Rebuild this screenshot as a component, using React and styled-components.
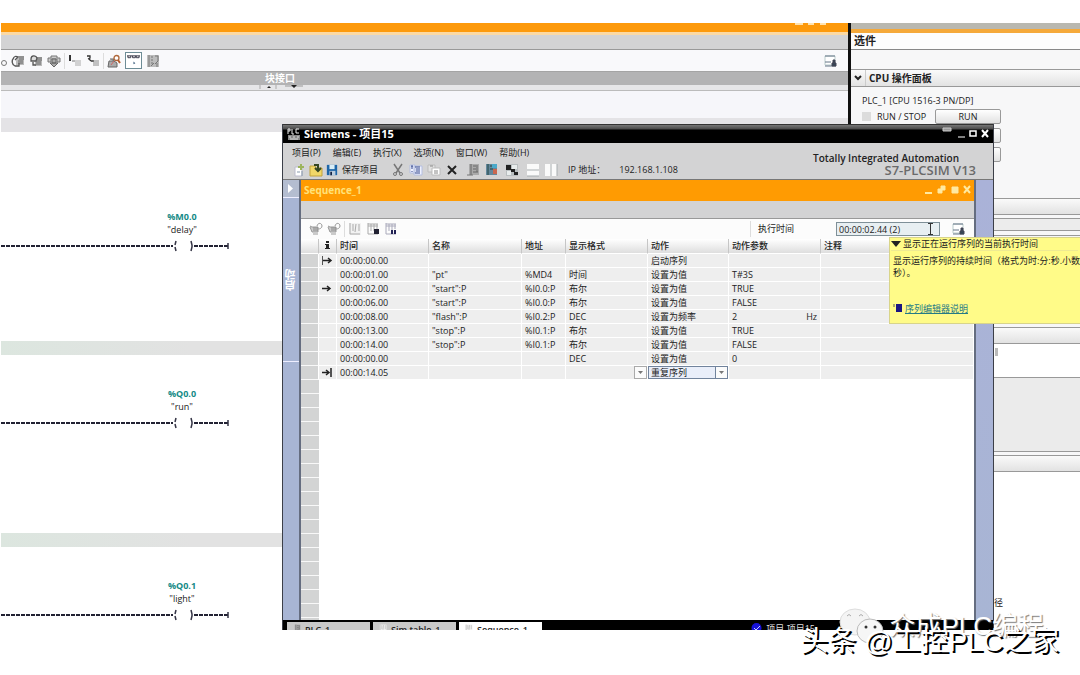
import styled, { createGlobalStyle, css } from "styled-components";

const GlobalStyle = createGlobalStyle`
  * {
    box-sizing: border-box;
  }

  body {
    margin: 0;
    background: #fff;
    color: #222;
    font-family: "Open Sans", "Noto Sans CJK SC", sans-serif;
    font-size: 9px;
    line-height: 12px;
    overflow: hidden;
  }

  button,
  input,
  select {
    margin: 0;
    padding: 0;
    border: 0;
    border-radius: 0;
    background: none;
    color: inherit;
    font: inherit;
  }
`;

const StyledPage = styled.div`
  position: relative;
  height: 100vh;
  padding: 23px 0 45px;
`;

const StyledScreen = styled.div`
  position: relative;
  display: flex;
  height: 100%;
  padding-left: 1px;
  overflow: hidden;
`;

const StyledEditor = styled.main`
  flex: 1;
  min-width: 0;
  background: #fff;
`;

const StyledOrangeBar = styled.div`
  display: flex;
  justify-content: flex-end;
  height: 12px;
  padding-right: 16px;
  background: linear-gradient(#fd9a0c 9px, #fbd9a4 9px);
`;

const StyledGreyBar = styled.div`
  height: 15px;
  background: #d3d3d4;
  border-bottom: 1px solid #999;
`;

const StyledToolbar = styled.div`
  display: flex;
  align-items: center;
  gap: 4px;
  height: 21px;
  background: #f9f9fb;

  button {
    display: flex;
  }
`;

const StyledEditorToolbar = styled(StyledToolbar)`
  padding: 0 11px 0 0;
`;

const StyledToggle = styled.button`
  padding: 1px;
  border: 1px solid #6d8c96;
  background: #fff;
`;

const StyledSeparator = styled.span`
  width: 1px;
  height: 16px;
  margin: 0 -1px;
  background: ${({ $hidden }) => ($hidden ? "transparent" : "#ddd")};
`;

const StyledSpacer = styled.span`
  flex: 1;
`;

const StyledInterfaceBar = styled.div`
  height: 14px;
  padding-left: 264px;
  background: #b3b3b4;
  border-top: 1px solid #a4a4a4;
  color: #fff;
  font-size: 10px;
  font-weight: 700;
`;

const StyledSplitter = styled.div`
  height: 6px;
  padding-left: 258px;
  background: #e6e6e8;
  border-bottom: 1px solid #bbb;

  svg {
    display: block;
  }
`;

const StyledPale = styled.div`
  height: 27px;
  background: #f6f6fa;
`;

const StyledNetwork = styled.section`
  height: ${({ $tall }) => ($tall ? 223 : 192)}px;
`;

const StyledNetworkBand = styled.div`
  height: 14px;
  margin-bottom: ${({ $tall }) => ($tall ? 78 : 32)}px;
  background: ${({ $tall }) => ($tall ? "#e4e3e6" : "linear-gradient(90deg, #dce6df, #e2e2e2 190px)")};
`;

const StyledOperand = styled.div`
  width: 60px;
  margin-left: 151px;
  text-align: center;
  line-height: 13px;

  strong {
    display: block;
    color: #148a86;
  }
`;

const StyledRung = styled.svg`
  display: block;
  margin-top: 4px;
`;

const StyledTasks = styled.aside`
  width: 232px;
  border-left: 3px solid #111;
  background: #f7f7f8;
`;

const StyledTasksTop = styled.div`
  height: 10px;
  background: linear-gradient(#b9b8b0 6px, #f5a93a 6px);
`;

const StyledTasksTitle = styled.h2`
  height: 17px;
  margin: 0;
  padding: 0 3px;
  border-bottom: 1px solid #888;
  background: #fdfdfd;
  font-size: 11px;
  line-height: 15px;
`;

const StyledTasksHeader = styled.div`
  display: flex;
  align-items: center;
  height: 18px;
  margin-top: 19px;
  border: solid #999;
  border-width: 1px 0;
  background: linear-gradient(#fafafa, #e2e2e2);

  h3 {
    margin: 0;
    padding-left: 3px;
    border-left: 1px solid #ccc;
    font-size: 10px;
    font-weight: 700;
    line-height: 16px;
  }

  svg {
    margin: 0 3px;
  }
`;

const StyledCpu = styled.div`
  height: 111px;
  padding: 8px 79px 0 11px;
`;

const StyledRunRow = styled.div`
  display: flex;
  align-items: center;
  height: 19px;

  i {
    width: 9px;
    height: 9px;
    margin-right: 6px;
    background: #dcdcdc;
  }
`;

const StyledPanelButton = styled.button`
  width: 66px;
  height: 15px;
  margin-left: auto;
  border: 1px solid #999;
  border-radius: 2px;
  background: linear-gradient(#fff, #e2e2e2);
  line-height: 13px;
`;

const StyledSection = styled.div`
  height: ${({ $height }) => $height}px;
  border-top: 1px solid #999;
  background: ${({ $fill }) => $fill || "#f7f7f8"};
`;

const StyledMark = styled.div`
  padding: 4px 0 0 144px;
`;

const StyledPathLabel = styled.div`
  padding: 125px 0 0 143px;
`;

const StyledWindow = styled.section`
  position: absolute;
  top: 101px;
  right: 86px;
  bottom: 0;
  left: 282px;
  display: flex;
  flex-direction: column;
  border: solid #3c3f48;
  border-width: 0 1px;
  background: #d3d3d4;
`;

const StyledTitleBar = styled.header`
  display: flex;
  align-items: center;
  gap: 4px;
  height: 19px;
  padding: 1px 3px 0 4px;
  background: linear-gradient(#333 1px, #777 1px, #4a4a4a 5px, #000 6px);
  color: #fff;

  h1 {
    flex: 1;
    margin: 0;
    font-size: 11px;
    font-weight: 700;
    line-height: 16px;
  }
`;

const StyledHead = styled.div`
  display: flex;
  height: 37px;
  border-bottom: 1px solid #777;
`;

const StyledHeadLeft = styled.div`
  flex: 1;
`;

const StyledMenu = styled.nav`
  display: flex;
  gap: 12px;
  padding: 4px 0 0 9px;
`;

const StyledAppToolbar = styled.div`
  display: flex;
  align-items: center;
  gap: 4px;
  height: 20px;
  padding: 1px 0 0 9px;

  button {
    display: flex;
    align-items: center;
    gap: 4px;
  }
`;

const StyledProjectTools = styled.div`
  display: flex;
  align-items: center;
  gap: 3px;
  margin-right: 6px;
`;

const StyledAddress = styled.span`
  padding-left: ${({ $gap }) => $gap}px;
  white-space: nowrap;
`;

const StyledBrand = styled.div`
  padding: 9px 17px 0 0;
  text-align: right;
  font-size: 10px;
  font-weight: 600;
  line-height: 12px;

  strong {
    display: block;
    color: #6a6a6a;
    font-size: 13px;
    font-weight: 600;
  }

  span {
    margin-right: 17px;
  }
`;

const StyledBody = styled.div`
  display: flex;
  flex: 1;
  min-height: 0;
`;

const StyledSide = styled.div`
  display: flex;
  flex-direction: column;
  align-items: center;
  width: 18px;
  border-right: 2px solid #656d80;
  background: #a8b5d4;
  color: #fff;
`;

const StyledSideToggle = styled.button`
  width: 100%;
  height: 18px;
  border-bottom: 1px solid #eef;
  background: #b4bdd0;

  svg {
    display: block;
    margin: auto;
  }
`;

const StyledSideTab = styled.button`
  width: 100%;
  height: 164px;
  border-bottom: 1px solid #eef;
  font-size: 11px;
  font-weight: 700;
  writing-mode: vertical-rl;

  span {
    display: inline-block;
    transform: rotate(180deg);
  }
`;

const StyledRightStrip = styled.div`
  width: 19px;
  border-left: 2px solid #656d80;
  background: linear-gradient(#aab2d8, #a8b5d4);
`;

const StyledSequence = styled.div`
  display: flex;
  flex: 1;
  flex-direction: column;
  min-width: 0;
  background: #fff;
`;

const StyledSequenceBar = styled.div`
  display: flex;
  align-items: center;
  height: 21px;
  padding: 0 2px 2px 3px;
  background: #ff9b02;
  color: #ffe27a;

  h2 {
    flex: 1;
    margin: 0;
    font-size: 10px;
    font-weight: 700;
  }
`;

const StyledSubBar = styled(StyledGreyBar)`
  height: 18px;
`;

const StyledSequenceToolbar = styled(StyledToolbar)`
  height: 20px;
  padding: 0 9px 0 8px;
  background: #fcfcfc;

  input {
    display: block;
    width: 104px;
    height: 14px;
    padding: 0 2px;
    border: 1px solid #7f9098;
    background: #e8eff2;
  }
`;

const StyledTimeLabel = styled.label`
  margin: 0 38px 0 4px;
`;

const StyledTimeBox = styled.div`
  position: relative;
  margin-right: 7px;

  svg {
    position: absolute;
    top: 1px;
    right: 6px;
  }
`;

const StyledGrid = styled.div`
  flex: 1;
  min-height: 0;
  overflow: hidden;
  background: repeating-linear-gradient(#f8f8f8 0 1px, #d3d4d4 1px 14px) 0 0 / 18px 100% no-repeat;
`;

const StyledTable = styled.table`
  width: 100%;
  border-collapse: separate;
  border-spacing: 0;
  table-layout: fixed;
  text-align: left;

  th {
    height: 15px;
    padding: 0 3px;
    border-right: 1px solid #c6c6c6;
    border-bottom: 1px solid #fff;
    background: linear-gradient(#fff, #dedede);
    color: #222;
    font-weight: 500;
    line-height: 12px;
  }

  td {
    height: 14px;
    padding: 0 3px;
    border-right: 1px solid #fff;
    border-bottom: 1px solid #fff;
    background: #eee;
    line-height: 13px;
    white-space: nowrap;
  }

  td:first-child {
    border-bottom-color: #f8f8f8;
    background: #d3d4d4;
  }

  td svg {
    display: block;
  }
`;

const StyledParam = styled.div`
  display: flex;
  justify-content: space-between;
`;

const StyledFlushCell = styled.td`
  && {
    padding: 0;
  }
`;

const arrowBox = css`
  display: flex;
  align-items: center;
  justify-content: center;
  width: 13px;
  height: 13px;
  border: 1px solid #aaa;
  background: #fbfbfb;
`;

const StyledArrowButton = styled.button`
  ${arrowBox}
  margin-left: auto;
`;

const StyledSelectBox = styled.div`
  position: relative;

  select {
    display: block;
    width: 100%;
    height: 13px;
    padding-left: 2px;
    border: 1px solid #71839c;
    background: #e9eef9;
    appearance: none;
    line-height: 11px;
  }

  span {
    ${arrowBox}
    position: absolute;
    top: 0;
    right: 0;
    border-color: #71839c;
    pointer-events: none;
  }
`;

const StyledFooter = styled.footer`
  display: flex;
  gap: 3px;
  height: 10px;
  padding: 2px 4px 0;
  background: #000;
  overflow: hidden;
`;

const StyledTab = styled.button`
  display: flex;
  gap: 4px;
  width: 83px;
  height: 18px;
  padding: 2px 6px;
  background: ${({ $active }) => ($active ? "#fff" : "#c9c9c9")};
  font-weight: 600;
`;

const StyledStatus = styled.div`
  display: flex;
  align-items: flex-start;
  gap: 4px;
  margin-right: 174px;
  margin-left: auto;
  color: #ddd;
  line-height: 14px;
`;

const StyledTooltip = styled.div`
  position: absolute;
  top: 214px;
  right: 0;
  width: 191px;
  height: 87px;
  padding: 0 4px 0 3px;
  border: 1px solid #d8d48a;
  border-right: 0;
  background: #fffb88;
  overflow: hidden;
  white-space: nowrap;

  p {
    margin: 4px 0 24px;
  }

  a {
    color: #247a86;
  }
`;

const StyledTooltipTitle = styled.div`
  display: flex;
  align-items: center;
  gap: 2px;
  margin: 0 -2px;
  border-bottom: 1px solid #eeea92;
`;

const StyledTooltipLink = styled.div`
  display: flex;
  gap: 2px;
`;

const StyledChannelMark = styled.div`
  position: absolute;
  right: 36px;
  bottom: 30px;
  display: flex;
  align-items: center;
  gap: 4px;
  color: #fff;
  font-family: "Liberation Sans", "Noto Sans CJK SC", sans-serif;
  font-size: 26px;
  line-height: 36px;
  text-shadow: 1px 1px 1px #777;
`;

const StyledAuthorMark = styled.div`
  position: absolute;
  right: 21px;
  bottom: 14px;
  color: #fff;
  font-family: "Liberation Sans", "Noto Sans CJK SC", sans-serif;
  font-size: 28px;
  line-height: 38px;
  text-shadow: 2px 2px 0 #000;
  white-space: nowrap;
`;

const icons = {
  dot: <circle cx="3" cy="9" r="2.5" fill="none" stroke="#777" />,
  goTo: (
    <>
      <path d="M6 2h7v9H5V7z" fill="#bbb" />
      <path d="M8 3h5M8 5h5M7 7h5M7 9h5" stroke="#666" />
      <path d="M3 4C0 6 1 11 4 12h4V9M2 5c1-3 3-3 5-2L4 6" fill="none" stroke="#555" strokeWidth="1.3" />
    </>
  ),
  goFrom: (
    <>
      <path d="M6 3h7v9H6z" fill="#bbb" />
      <path d="M8 4h5M8 6h5M7 8h5M7 10h5" stroke="#666" />
      <path d="M2 5c0-4 5-4 6-1L7 7H2zM4 8v3h3" fill="#ddd" stroke="#555" strokeWidth="1.3" />
    </>
  ),
  shield: (
    <>
      <path d="M1 4h3V2h6v2h3v4h-3V5H4v3H1z" fill="#ccc" stroke="#777" />
      <path d="M3 9h8l-4 4zM5 5h4v4H5z" fill="#aaa" stroke="#666" />
    </>
  ),
  insert: (
    <>
      <path d="M2 1v6" stroke="#333" strokeWidth="2" />
      <path d="M4 7h3" stroke="#777" />
      <path d="M7 7h6M7 9h6M7 11h6" stroke="#aaa" />
    </>
  ),
  append: (
    <>
      <path d="M1 2h3v2L2 5M3 5l2 2M5 7h3" fill="none" stroke="#333" strokeWidth="1.3" />
      <path d="M7 7h6M7 9h6M7 11h6" stroke="#888" />
    </>
  ),
  search: (
    <>
      <path d="M2 7h5l3 2v4H1zM3 5h4v3" fill="#aaa" stroke="#666" />
      <path d="M4 11l3-4" stroke="#c66" />
      <circle cx="9.500" cy="4" r="2.500" fill="#fff" stroke="#b0683c" strokeWidth="1.300" />
      <path d="M11 6l2 3" stroke="#b65a2a" strokeWidth="2" />
    </>
  ),
  glasses: (
    <>
      <path d="M0 2h14M1 2v2h3V2M6 2v2h3V2M10 2v2h3V2" fill="none" stroke="#334" />
      <path d="M7 8l2 2-2 1z" fill="#357" />
    </>
  ),
  block: (
    <>
      <path d="M1 1h12v12H1z" fill="#bcbcbc" />
      <path d="M3 1v12M5 3h2M5 6h2M5 9h2M5 12l3-3M9 2h3v5l-3 3M11 9v4" fill="none" stroke="#777" />
    </>
  ),
  settings: (
    <>
      <path d="M2 2h10v9H2z" fill="#fff" stroke="#bcc" />
      <path d="M2 2h10M2 8h6M2 12h11" stroke="#678" />
      <path d="M9 9h4v3H9zM10 9V6h2v3" fill="#345" stroke="#445" />
    </>
  ),
  newProject: (
    <>
      <path d="M3 4h7v9H3z" fill="#fff" stroke="#bbc" />
      <path d="M9 1v6M6 4h6" stroke="#9cb45c" strokeWidth="2" />
      <path d="M5 9h3M10 8v5" stroke="#89a" />
    </>
  ),
  open: (
    <>
      <path d="M1 3h5l1 2h6v8H1z" fill="#f1d768" stroke="#c1a23d" />
      <path d="M5 2h4v5M6 5l3 3 3-3" fill="none" stroke="#344622" strokeWidth="2" />
    </>
  ),
  save: (
    <>
      <path d="M1 1h12v12H1z" fill="#1d65a8" />
      <path d="M4 1h6v5H4z" fill="#d9edf7" />
      <path d="M4 8h7v5H4z" fill="#bcd" />
      <path d="M5 9h2v4H5z" fill="#124" />
    </>
  ),
  cut: (
    <>
      <path d="M3 1l6 9M11 1L5 10" stroke="#777" strokeWidth="1.500" />
      <circle cx="4" cy="11" r="1.500" fill="none" stroke="#777" />
      <circle cx="10" cy="11" r="1.500" fill="none" stroke="#777" />
    </>
  ),
  copy: (
    <>
      <path d="M1 2h5v8H1zM5 3h8v9H5z" fill="#eef1ff" stroke="#b5bfe0" />
      <path d="M2 3h2M3 3v3M3 8v1M6 4h5M7 6h4M7 8h4M6 10h5" stroke="#35498c" />
    </>
  ),
  paste: (
    <>
      <path d="M1 2h7v7H1z" fill="#e2e2e2" stroke="#bbb" />
      <path d="M5 5h8v7H5z" fill="#fff" stroke="#bbb" />
      <path d="M3 3h3M7 8h4M7 10h4" stroke="#888" />
    </>
  ),
  remove: <path d="M3 3l8 8M11 3l-8 8" stroke="#222" strokeWidth="2" />,
  device: (
    <>
      <path d="M3 1h10v11H3z" fill="#aaa" />
      <path d="M5 1v11M7 3h3M7 6h3M7 9h5M11 2v7" stroke="#666" />
      <path d="M1 12h6" stroke="#777" />
    </>
  ),
  deviceRun: (
    <>
      <path d="M2 1h11v11H2z" fill="#63879b" />
      <path d="M4 1v11M6 3h3M6 6h3" stroke="#244" />
      <path d="M8 1h5v4H8z" fill="#4ba9c9" />
      <path d="M9 6h4v5H9z" fill="#c9674f" />
    </>
  ),
  flag: (
    <>
      <path d="M1 1h12v12H1z" fill="#b9bec0" />
      <path d="M1 2h5v5H1zM6 6h4v3H6zM9 9h4v3H9z" fill="#222" />
      <path d="M7 2h5v4H7zM2 8h4v4H2z" fill="#e8ecec" />
    </>
  ),
  splitH: (
    <>
      <path d="M1 1h12v12H1z" fill="#fafafa" />
      <path d="M1 7h12M1 13h12" stroke="#a8aeb0" />
    </>
  ),
  splitV: (
    <>
      <path d="M1 1h12v12H1z" fill="#fafafa" />
      <path d="M7 1v12M13 1v12" stroke="#a8aeb0" />
    </>
  ),
  cart: (
    <>
      <path d="M1 4l2 1h6v5H3L1 5M4 12h5" fill="#ccc" stroke="#999" />
      <path d="M4 6h5M4 8h5" stroke="#888" />
      <path d="M8 4c1-4 5-3 5 0 0 2-2 3-4 3" fill="none" stroke="#999" />
    </>
  ),
  chart: (
    <>
      <path d="M1 1h12v12H1z" fill="#f2f2f2" />
      <path d="M2 1v11h10M5 2v7M8 2l-1 8M11 2v7" fill="none" stroke="#aaa" />
    </>
  ),
  chartStop: (
    <>
      <path d="M2 2h10M2 4h10M2 1v11h10M5 2v7M8 2v7M11 2v5" fill="none" stroke="#aaa" />
      <path d="M8 7h5v5H8z" fill="#223" />
    </>
  ),
  chartPause: (
    <>
      <path d="M2 2h10M2 4h10M2 1v11h10M5 2v7M8 2v7M11 2v5" fill="none" stroke="#aab" />
      <path d="M8 8v4M11 8v4" stroke="#225" strokeWidth="2" />
    </>
  ),
};

const Icon = ({ name, size = 14 }) => (
  <svg width={size} height={size} viewBox="0 0 14 14" aria-hidden="true">
    {icons[name]}
  </svg>
);

const Caret = () => (
  <svg width="5" height="3" aria-hidden="true">
    <path d="M0 0h5L2.500 3z" fill="#777" />
  </svg>
);

const ToolButton = ({ name, label }) => (
  <button type="button" aria-label={label || name}>
    <Icon name={name} />
  </button>
);

const Network = ({ address, symbol, tall }) => (
  <StyledNetwork $tall={tall}>
    <StyledNetworkBand $tall={tall} />
    <StyledOperand>
      <strong>{address}</strong>
      {symbol}
    </StyledOperand>
    <StyledRung width="228" height="12" aria-hidden="true">
      <path d="M0 6h172M193 6h34" stroke="#223" strokeWidth="2" strokeDasharray="4 1" />
      <path d="M175 1l-1 4M174 7l1 4M190 1l1 4v2l-1 4M227 3v6" stroke="#334" strokeWidth="1.500" fill="none" />
    </StyledRung>
  </StyledNetwork>
);

const marks = {
  start: <path d="M1 1v9M2 5.500h8M7 3l3 2.500L7 8" />,
  current: <path d="M1 5.500h8M6 3l3 2.500L6 8" />,
  end: <path d="M1 5.500h7M5 3l3 2.500L5 8M10 1v9" />,
};

const StepMark = ({ type }) => (
  <svg width="11" height="11" viewBox="1 0 11 11" fill="none" stroke="#222" strokeWidth="1.500" aria-hidden="true">
    {marks[type]}
  </svg>
);

const rows = [
  { mark: "start", time: "00:00:00.00", action: "启动序列" },
  { time: "00:00:01.00", name: '"pt"', address: "%MD4", format: "时间", action: "设置为值", param: "T#3S" },
  { mark: "current", time: "00:00:02.00", name: '"start":P', address: "%I0.0:P", format: "布尔", action: "设置为值", param: "TRUE" },
  { time: "00:00:06.00", name: '"start":P', address: "%I0.0:P", format: "布尔", action: "设置为值", param: "FALSE" },
  { time: "00:00:08.00", name: '"flash":P', address: "%I0.2:P", format: "DEC", action: "设置为频率", param: "2", unit: "Hz" },
  { time: "00:00:13.00", name: '"stop":P', address: "%I0.1:P", format: "布尔", action: "设置为值", param: "TRUE" },
  { time: "00:00:14.00", name: '"stop":P', address: "%I0.1:P", format: "布尔", action: "设置为值", param: "FALSE" },
  { time: "00:00:00.00", format: "DEC", action: "设置为值", param: "0" },
];

const columns = [18, 18, 92, 93, 44, 82, 81, 92];

const SequenceTable = () => (
  <StyledTable>
    <colgroup>
      {columns.map((width, index) => (
        <col key={index} width={width} />
      ))}
      <col />
    </colgroup>
    <thead>
      <tr>
        <th />
        <th>
          <svg width="10" height="10" aria-hidden="true">
            <path d="M4 1h3v2H4zM3 4h4v4h1v1H3V8h1V5H3z" fill="#222" />
          </svg>
        </th>
        <th>时间</th>
        <th>名称</th>
        <th>地址</th>
        <th>显示格式</th>
        <th>动作</th>
        <th>动作参数</th>
        <th>注释</th>
      </tr>
    </thead>
    <tbody>
      {rows.map((row, index) => (
        <tr key={index}>
          <td />
          <td>{row.mark && <StepMark type={row.mark} />}</td>
          <td>{row.time}</td>
          <td>{row.name}</td>
          <td>{row.address}</td>
          <td>{row.format}</td>
          <td>{row.action}</td>
          <td>
            <StyledParam>
              {row.param}
              <span>{row.unit}</span>
            </StyledParam>
          </td>
          <td />
        </tr>
      ))}
      <tr>
        <td />
        <td>
          <StepMark type="end" />
        </td>
        <td>00:00:14.05</td>
        <td />
        <td />
        <StyledFlushCell>
          <StyledArrowButton type="button" aria-label="格式">
            <Caret />
          </StyledArrowButton>
        </StyledFlushCell>
        <StyledFlushCell>
          <StyledSelectBox>
            <select aria-label="动作">
              <option>重复序列</option>
            </select>
            <span>
              <Caret />
            </span>
          </StyledSelectBox>
        </StyledFlushCell>
        <td />
        <td />
      </tr>
    </tbody>
  </StyledTable>
);

const SimWindow = () => (
  <StyledWindow>
    <StyledTitleBar>
      <svg width="13" height="13" aria-hidden="true">
        <path d="M1 6V1h2v2H1M5 1v5h2M12 1H9v4h3" stroke="#eee" fill="none" />
        <path d="M1 7h12v5H1z" fill="#888" />
        <path d="M2 9h2M6 9h2M10 9h2M3 11h8" stroke="#ddd" />
      </svg>
      <h1>Siemens - 项目15</h1>
      <svg width="48" height="14" fill="none" stroke="#fff" aria-hidden="true">
        <path d="M1 1h8v3H1z" fill="#999" stroke="#ccc" />
        <path d="M16 10h7" />
        <path d="M28 4h6v5h-6z" strokeWidth="1.500" />
        <path d="M40 3l6 7M46 3l-6 7" strokeWidth="2" />
      </svg>
    </StyledTitleBar>
    <StyledHead>
      <StyledHeadLeft>
        <StyledMenu>
          {["项目(P)", "编辑(E)", "执行(X)", "选项(N)", "窗口(W)", "帮助(H)"].map((item) => (
            <button type="button" key={item}>
              {item}
            </button>
          ))}
        </StyledMenu>
        <StyledAppToolbar>
          <StyledProjectTools>
            <ToolButton name="newProject" />
            <ToolButton name="open" />
            <button type="button">
              <Icon name="save" size={12} />
              保存项目
            </button>
          </StyledProjectTools>
          <StyledSeparator $hidden />
          <ToolButton name="cut" />
          <ToolButton name="copy" />
          <ToolButton name="paste" />
          <ToolButton name="remove" />
          <StyledSeparator $hidden />
          <ToolButton name="device" />
          <ToolButton name="deviceRun" />
          <StyledSeparator $hidden />
          <ToolButton name="flag" />
          <StyledSeparator $hidden />
          <ToolButton name="splitH" />
          <ToolButton name="splitV" />
          <StyledAddress $gap={6}>IP 地址：</StyledAddress>
          <StyledAddress $gap={10}>192.168.1.108</StyledAddress>
        </StyledAppToolbar>
      </StyledHeadLeft>
      <StyledBrand>
        <span>Totally Integrated Automation</span>
        <strong>S7-PLCSIM V13</strong>
      </StyledBrand>
    </StyledHead>
    <StyledBody>
      <StyledSide>
        <StyledSideToggle type="button" aria-label="展开">
          <svg width="6" height="9" aria-hidden="true">
            <path d="M0 0l5 4.500L0 9z" fill="#fff" />
          </svg>
        </StyledSideToggle>
        <StyledSideTab type="button">
          <span>启动</span>
        </StyledSideTab>
      </StyledSide>
      <StyledSequence>
        <StyledSequenceBar>
          <h2>Sequence_1</h2>
          <svg width="48" height="10" fill="#ffe9a0" stroke="#ffe9a0" aria-hidden="true">
            <path d="M1 8h7" strokeWidth="2" />
            <path d="M17 1h4v4h-4zM14 4h4v4h-4z" />
            <path d="M28 2h6v6h-6z" />
            <path d="M40 1l6 7M46 1l-6 7" strokeWidth="2" />
          </svg>
        </StyledSequenceBar>
        <StyledSubBar />
        <StyledSequenceToolbar>
          <ToolButton name="cart" />
          <ToolButton name="cart" label="cart up" />
          <StyledSeparator />
          <ToolButton name="chart" />
          <ToolButton name="chartStop" />
          <ToolButton name="chartPause" />
          <StyledSpacer />
          <StyledSeparator />
          <StyledTimeLabel htmlFor="run-time">执行时间</StyledTimeLabel>
          <StyledTimeBox>
            <input id="run-time" defaultValue="00:00:02.44 (2)" />
            <svg width="7" height="12" fill="none" stroke="#333" aria-hidden="true">
              <path d="M1 .5h5M3.500 1v10M1 11.500h5" />
            </svg>
          </StyledTimeBox>
          <ToolButton name="settings" />
        </StyledSequenceToolbar>
        <StyledGrid>
          <SequenceTable />
        </StyledGrid>
      </StyledSequence>
      <StyledRightStrip />
    </StyledBody>
    <StyledFooter>
      <StyledTab type="button">
        <Icon name="device" size={8} />
        PLC_1
      </StyledTab>
      <StyledTab type="button">
        <Icon name="chart" size={8} />
        Sim table_1
      </StyledTab>
      <StyledTab type="button" $active>
        <Icon name="chart" size={8} />
        Sequence_1
      </StyledTab>
      <StyledStatus>
        <svg width="11" height="11" aria-hidden="true">
          <circle cx="5.500" cy="6" r="5" fill="#1712d8" />
          <path d="M3 6l2 2 4-4" stroke="#ccf" fill="none" />
        </svg>
        项目 项目15
      </StyledStatus>
    </StyledFooter>
  </StyledWindow>
);

const Tasks = () => (
  <StyledTasks>
    <StyledTasksTop />
    <StyledTasksTitle>选件</StyledTasksTitle>
    <StyledTasksHeader>
      <svg width="8" height="8" fill="none" stroke="#222" strokeWidth="2" aria-hidden="true">
        <path d="M1 2l3 3 3-3" />
      </svg>
      <h3>CPU 操作面板</h3>
    </StyledTasksHeader>
    <StyledCpu>
      PLC_1 [CPU 1516-3 PN/DP]
      <StyledRunRow>
        <i />
        RUN / STOP
        <StyledPanelButton type="button">RUN</StyledPanelButton>
      </StyledRunRow>
      <StyledRunRow>
        <StyledPanelButton type="button" aria-label="STOP" />
      </StyledRunRow>
      <StyledRunRow>
        <StyledPanelButton type="button" aria-label="MRES" />
      </StyledRunRow>
    </StyledCpu>
    <StyledSection $height={16} $fill="linear-gradient(#fafafa, #e2e2e2)" />
    <StyledSection $height={4} />
    <StyledSection $height={12} $fill="#ececec" />
    <StyledSection $height={5} />
    <StyledSection $height={92} />
    <StyledSection $height={16} $fill="linear-gradient(#fafafa, #e2e2e2)" />
    <StyledSection $height={34} $fill="#fff">
      <StyledMark>
        <svg width="4" height="9" aria-hidden="true">
          <path d="M0 1h3M0 3h3M0 5h3M0 7h3" stroke="#777" />
        </svg>
      </StyledMark>
    </StyledSection>
    <StyledSection $height={74} $fill="#ebebeb" />
    <StyledSection $height={4} />
    <StyledSection $height={16} $fill="linear-gradient(#fafafa, #e2e2e2)" />
    <StyledSection $height={159} $fill="#fff">
      <StyledPathLabel>径</StyledPathLabel>
    </StyledSection>
  </StyledTasks>
);

const App = () => (
  <StyledPage>
    <GlobalStyle />
    <StyledScreen>
      <StyledEditor>
        <StyledOrangeBar>
          <svg width="38" height="3" aria-hidden="true">
            <path d="M1 1h8M14 1h6M26 1h6" stroke="#ffe3b0" strokeWidth="2" />
          </svg>
        </StyledOrangeBar>
        <StyledGreyBar />
        <StyledEditorToolbar>
          <svg width="6" height="14" aria-hidden="true">
            {icons.dot}
          </svg>
          <ToolButton name="goTo" />
          <ToolButton name="goFrom" />
          <ToolButton name="shield" />
          <StyledSeparator />
          <ToolButton name="insert" />
          <ToolButton name="append" />
          <StyledSeparator />
          <ToolButton name="search" />
          <StyledToggle type="button" aria-label="glasses">
            <Icon name="glasses" size={13} />
          </StyledToggle>
          <ToolButton name="block" />
          <StyledSpacer />
          <ToolButton name="settings" />
        </StyledEditorToolbar>
        <StyledInterfaceBar>块接口</StyledInterfaceBar>
        <StyledSplitter>
          <svg width="52" height="5" aria-hidden="true">
            <path d="M1 0v4M17 0v4" stroke="#aaa" />
            <path d="M26 1h18" stroke="#999" />
            <path d="M8 3l2-2 2 2zM32 0h6l-3 3z" fill="#222" />
          </svg>
        </StyledSplitter>
        <StyledPale />
        <Network address="%M0.0" symbol={'"delay"'} tall />
        <Network address="%Q0.0" symbol={'"run"'} />
        <Network address="%Q0.1" symbol={'"light"'} />
      </StyledEditor>
      <Tasks />
      <SimWindow />
      <StyledTooltip role="tooltip">
        <StyledTooltipTitle>
          <svg width="10" height="6" aria-hidden="true">
            <path d="M0 0h10L5 6z" fill="#222" />
          </svg>
          显示正在运行序列的当前执行时间
        </StyledTooltipTitle>
        <p>
          显示运行序列的持续时间（格式为时:分:秒.小数
          <br />
          秒）。
        </p>
        <StyledTooltipLink>
          <svg width="10" height="10" aria-hidden="true">
            <path d="M3 1h6v8H3z" fill="#1b1682" />
            <path d="M1 1v3" stroke="#555" />
          </svg>
          <a href="#help">序列编辑器说明</a>
        </StyledTooltipLink>
      </StyledTooltip>
    </StyledScreen>
    <StyledChannelMark>
      <svg width="46" height="38" aria-hidden="true">
        <ellipse cx="16" cy="15" rx="15" ry="13" fill="#f4f4f4" stroke="#ddd" />
        <path d="M8 9q2-3 4 0M20 9q2-3 4 0" stroke="#aaa" fill="none" />
        <ellipse cx="31" cy="24" rx="13" ry="12" fill="#f6f6f6" stroke="#bbb" />
        <circle cx="27" cy="20" r="1.500" fill="#333" />
        <circle cx="36" cy="20" r="1.500" fill="#333" />
      </svg>
      众成PLC编程
    </StyledChannelMark>
    <StyledAuthorMark>头条 @工控PLC之家</StyledAuthorMark>
  </StyledPage>
);

export default App;
